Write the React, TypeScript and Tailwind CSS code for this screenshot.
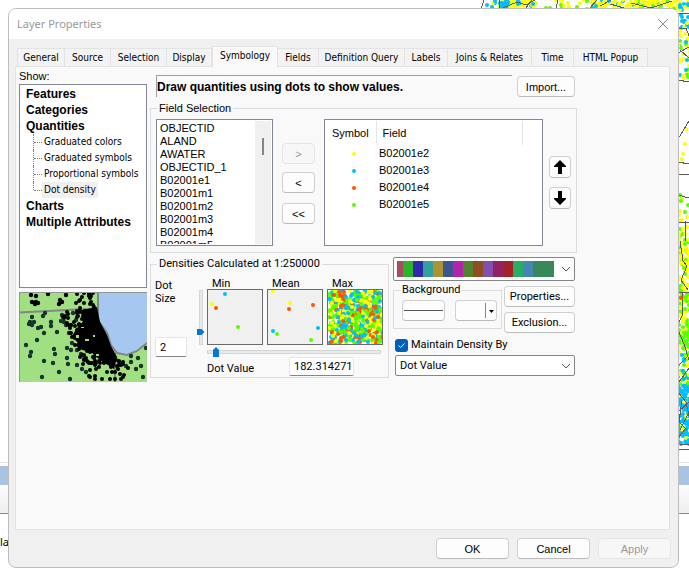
import React from "react";
import clsx from "clsx";

const YELLOW = "#ffff00";
const BLUE = "#00bfff";
const ORANGE = "#ff5500";
const GREEN = "#55ff00";

function seeded(seed: number) {
  let s = seed;
  return () => {
    s = (s * 1664525 + 1013904223) % 4294967296;
    return s / 4294967296;
  };
}

type Dot = { x: number; y: number; c: string };

function scatter(
  seed: number,
  count: number,
  x: number,
  y: number,
  w: number,
  h: number,
  colors: string[]
): Dot[] {
  const rnd = seeded(seed);
  return Array.from({ length: count }, () => ({
    x: Math.round(x + rnd() * w),
    y: Math.round(y + rnd() * h),
    c: colors[Math.floor(rnd() * colors.length)],
  }));
}

function Dots({ dots, r = 2 }: { dots: Dot[]; r?: number }) {
  return (
    <>
      {dots.map((d, i) => (
        <circle key={i} cx={d.x} cy={d.y} r={r} fill={d.c} />
      ))}
    </>
  );
}

const TOP_DOTS = [
  ...scatter(3, 5, 484, 0, 14, 9, [YELLOW, BLUE]),
  ...scatter(5, 70, 499, 0, 38, 9, [YELLOW, BLUE, YELLOW, YELLOW]),
  ...scatter(6, 14, 500, 0, 8, 9, [BLUE]),
  ...scatter(7, 16, 538, 0, 50, 9, [YELLOW, GREEN, YELLOW]),
  ...scatter(9, 50, 592, 0, 43, 9, [YELLOW, YELLOW, YELLOW, BLUE]),
  ...scatter(11, 70, 635, 0, 54, 9, [YELLOW, YELLOW, YELLOW, GREEN]),
];

const SIDE_DOTS = [
  ...scatter(13, 26, 678, 4, 12, 24, [YELLOW, BLUE, BLUE]),
  ...scatter(15, 36, 678, 28, 12, 52, [YELLOW, YELLOW, YELLOW, BLUE, GREEN]),
  ...scatter(17, 4, 680, 118, 9, 50, [YELLOW]),
  ...scatter(19, 18, 678, 195, 10, 40, [YELLOW, YELLOW, GREEN]),
  ...scatter(21, 80, 678, 234, 12, 60, [YELLOW, YELLOW, GREEN]),
  ...scatter(23, 100, 678, 294, 12, 60, [GREEN, YELLOW, GREEN]),
  ...scatter(25, 50, 678, 354, 12, 32, [GREEN, BLUE, YELLOW]),
  ...scatter(27, 120, 678, 386, 12, 58, [BLUE, BLUE, BLUE, BLUE, BLUE, BLUE, BLUE, YELLOW]),
];

function MapBackdrop() {
  return (
    <svg
      className="absolute top-0 right-0"
      width="689"
      height="460"
      viewBox="0 0 689 460"
      aria-hidden="true"
    >
      <Dots dots={TOP_DOTS} />
      <Dots dots={SIDE_DOTS} />
      <path
        d="M484 0 481 9M499 0v9M503 8l14-6 9 3 9-5M526 8l6-8M556 8l2-8M590 8l7-8M600 6l11-6M631 3l20 5 21-7M610 4l14 4M678 13h11M678 28l8 0 3 8M680 50l9 8M678 53l11-6M678 80l11 2M678 139l11-18M678 162l11 2M678 175l11-1M678 195l11 3M685 221v20M678 222h11M680 241l3 20 4 5-6 14 7 10M678 292h11M682 292v24l-4 8M678 330l6 14 5 16M678 366l9-9M679 382l10-14M678 392l8 10 3 14M678 412l11-10M682 400l-3 22 8 8M688 414l-8 16M678 438l8-10M680 444h9M679 449h10"
        fill="none"
        stroke="#5a5a5a"
        strokeWidth="1"
        shapeRendering="crispEdges"
      />
      <circle cx="681" cy="298" r="2" fill={ORANGE} />
    </svg>
  );
}

const TABS = [
  { name: "General", width: "w-12" },
  { name: "Source", width: "w-[46px]" },
  { name: "Selection", width: "w-14" },
  { name: "Display", width: "w-[45px]" },
  { name: "Symbology", width: "w-[66px]" },
  { name: "Fields", width: "w-[41px]" },
  { name: "Definition Query", width: "w-[86px]" },
  { name: "Labels", width: "w-[43px]" },
  { name: "Joins & Relates", width: "w-[84px]" },
  { name: "Time", width: "w-[42px]" },
  { name: "HTML Popup", width: "w-[74px]" },
];

const CONDENSED = "font-['DejaVu_Sans_Condensed','Liberation_Sans',sans-serif] text-[10px]";

function TabBar() {
  return (
    <div role="tablist" className={clsx("flex h-[27px] items-end pl-2", CONDENSED)}>
      {TABS.map((t) => {
        const active = t.name === "Symbology";
        return (
          <button
            key={t.name}
            type="button"
            role="tab"
            aria-selected={active}
            className={clsx(
              "shrink-0 border-t border-r border-[#e3e3e3] text-center whitespace-nowrap",
              t.width,
              active ? "z-10 -mb-px h-[21px] border-l bg-[#f9f9f9] pb-0.5" : "h-[18px] bg-[#f3f3f3]",
              t.name === "General" && "border-l"
            )}
          >
            {t.name}
          </button>
        );
      })}
    </div>
  );
}

function PushButton({
  children,
  className,
  disabled,
  label,
}: {
  children: React.ReactNode;
  className?: string;
  disabled?: boolean;
  label?: string;
}) {
  return (
    <button
      type="button"
      disabled={disabled}
      aria-label={label}
      className={clsx(
        "flex shrink-0 items-center justify-center rounded border",
        disabled
          ? "border-[#e6e6e6] bg-[#f7f7f7] text-[#9a9a9a]"
          : "border-[#d0d0d0] border-b-[#bbbbbb] bg-[#fdfdfd]",
        className
      )}
    >
      {children}
    </button>
  );
}

function Group({
  title,
  className,
  children,
}: {
  title: string;
  className?: string;
  children: React.ReactNode;
}) {
  return (
    <fieldset className={clsx("min-w-0 border border-[#dcdcdc]", className)}>
      <legend className="ml-1.5 h-3.5 px-0.5 leading-[14px] whitespace-nowrap">{title}</legend>
      {children}
    </fieldset>
  );
}

function TreeHeading({ children }: { children: React.ReactNode }) {
  return (
    <div className="h-4 pl-1.5 text-[12px] leading-4 font-bold">
      {children}
    </div>
  );
}

const QUANTITIES = ["Graduated colors", "Graduated symbols", "Proportional symbols", "Dot density"];

function ShowTree() {
  return (
    <div className="h-[204px] border border-[#82879a] bg-white pt-px">
      <TreeHeading>Features</TreeHeading>
      <TreeHeading>Categories</TreeHeading>
      <TreeHeading>Quantities</TreeHeading>
      <ul className={clsx("pl-[13px]", CONDENSED)}>
        {QUANTITIES.map((q, i) => (
          <li key={q} className="flex h-4 leading-4 whitespace-nowrap">
            <span
              className={clsx(
                "shrink-0 border-l border-dotted border-[#808080]",
                i === QUANTITIES.length - 1 ? "h-2" : "h-4"
              )}
            />
            <span className="mt-2 h-0 w-2 shrink-0 border-t border-dotted border-[#808080]" />
            <span className={clsx("px-0.5", q === "Dot density" && "bg-[#f0f0f0]")}>{q}</span>
          </li>
        ))}
      </ul>
      <TreeHeading>Charts</TreeHeading>
      <TreeHeading>Multiple Attributes</TreeHeading>
    </div>
  );
}

function cityDots(): Dot[] {
  const rnd = seeded(42);
  const out: Dot[] = [];
  for (let i = 0; i < 110; i++) {
    const y = 18 + rnd() * 54;
    const coast = 77 + Math.max(0, y - 26) * 0.45;
    out.push({ x: Math.round(coast - rnd() * 32 - 2), y: Math.round(y), c: "#000000" });
  }
  for (let i = 0; i < 34; i++) {
    out.push({ x: Math.round(66 + rnd() * 44), y: Math.round(68 + rnd() * 20), c: "#000000" });
  }
  for (let i = 0; i < 24; i++) {
    out.push({ x: Math.round(56 + rnd() * 20), y: Math.round(rnd() * 22), c: "#000000" });
  }
  return out;
}

const CITY = cityDots();

const TOWNS: [number, number][] = [
  [12, 3], [17, 4], [13, 10], [16, 12], [19, 11], [17, 10], [29, 2], [41, 8], [43, 10], [40, 12], [47, 3],
  [13, 25], [11, 30], [13, 33], [10, 32], [15, 30], [19, 36], [22, 35], [26, 21], [24, 24], [32, 30], [32, 34],
  [43, 23], [42, 29], [45, 30], [47, 33], [38, 40], [25, 41], [7, 53], [18, 48], [12, 60], [11, 64],
  [35, 57], [36, 62], [25, 69], [34, 71], [40, 80], [23, 85], [51, 87], [48, 66], [49, 72], [52, 58],
  [48, 56], [58, 58], [53, 51], [56, 46], [50, 41], [52, 33], [62, 62], [65, 67], [63, 77], [67, 80],
  [54, 21], [58, 73], [57, 28], [61, 48], [64, 54], [122, 74], [124, 85], [112, 70], [119, 66],
  [112, 64], [127, 56], [117, 77], [107, 74],
];

function LayerThumbnail() {
  return (
    <svg className="mt-1 block" width="128" height="90" viewBox="0 0 128 90" aria-hidden="true">
      <rect width="128" height="90" fill="#a1e082" />
      <path d="M79 0V28L88 41 92 53 98 61 108 62 118 59 128 51V0Z" fill="#a6c8f0" />
      <path
        d="M0 20.500 78 16.500M79 0V28L88 41 92 53 98 61 108 63 118 59 128 51M96 61v29"
        fill="none"
        stroke="#858585"
        strokeWidth="2"
      />
      {TOWNS.map(([x, y], i) => (
        <circle key={i} cx={x} cy={y} r="2.200" fill={y < 18 ? "#000000" : "#17342f"} />
      ))}
      <path
        d="M63 18 78 15 81 30 88 43 92 54 98 65 95 77 81 68 72 60 63 58 58 50 53 44 58 36 64 30Z"
        fill="#000000"
      />
      <Dots dots={CITY} r={2} />
      <path d="M57 43h3v3h-3ZM66 47h4v2h-4ZM74 43h2v2h-2ZM62 35h3v1h-3ZM77 62h3v2h-3Z" fill="#a1e082" />
      <path d="M.5 90V.5H128" fill="none" stroke="#929292" />
    </svg>
  );
}

const FIELDS = [
  "OBJECTID", "ALAND", "AWATER", "OBJECTID_1", "B02001e1",
  "B02001m1", "B02001m2", "B02001m3", "B02001m4", "B02001m5",
];

const SYMBOLS = [
  { field: "B02001e2", color: YELLOW },
  { field: "B02001e3", color: BLUE },
  { field: "B02001e4", color: ORANGE },
  { field: "B02001e5", color: GREEN },
];

function Arrow({ down }: { down?: boolean }) {
  return (
    <svg width="14" height="16" viewBox="0 0 14 16" className={down ? "rotate-180" : undefined}>
      <path d="M7 1 13 7V8H9V15H5V8H1V7Z" fill="#000" />
    </svg>
  );
}

function FieldSelection() {
  return (
    <Group title="Field Selection" className="mt-1 h-[152px]">
      <div className="flex px-[5px] pt-1">
        <div className="flex h-[127px] w-[117px] shrink-0 border border-[#82879a] bg-white p-px">
          <ul
            role="listbox"
            aria-label="Available fields"
            className="flex-1 overflow-hidden pl-0.5"
          >
            {FIELDS.map((f) => (
              <li key={f} role="option" aria-selected={false} className="h-[13px] leading-[14px]">
                {f}
              </li>
            ))}
          </ul>
          <div className="flex w-4 justify-center bg-[#f0f0f0] pt-[17px]">
            <div className="h-[17px] w-0.5 bg-[#858585]" />
          </div>
        </div>
        <div className="ml-[9px] flex w-[33px] shrink-0 flex-col pt-6">
          <PushButton disabled className="h-[21px] w-full">&gt;</PushButton>
          <PushButton className="mt-2 h-[21px] w-full">&lt;</PushButton>
          <PushButton className="mt-2.5 h-[21px] w-full">&lt;&lt;</PushButton>
        </div>
        <div className="ml-[9px] min-w-0 flex-1 border border-[#82879a] bg-white pt-px">
          <table className="w-full table-fixed border-collapse text-left">
            <thead>
              <tr className="h-6">
                <th scope="col" className="w-[51px] border-r border-[#e5e5e5] pl-[7px] font-normal">Symbol</th>
                <th scope="col" className="border-r border-[#e5e5e5] pl-1.5 font-normal">Field</th>
                <td className="w-5" />
              </tr>
            </thead>
            <tbody>
              {SYMBOLS.map((s) => (
                <tr key={s.field} className="h-[17px] leading-[17px]">
                  <td className="pl-[27px]">
                    <svg width="4" height="4" viewBox="0 0 4 4" className="block">
                      <circle cx="2" cy="2" r="2" fill={s.color} />
                    </svg>
                  </td>
                  <td className="pl-[3px]">{s.field}</td>
                  <td />
                </tr>
              ))}
            </tbody>
          </table>
        </div>
        <div className="ml-1.5 flex w-[22px] shrink-0 flex-col gap-[9px] pt-[37px]">
          <PushButton label="Move up" className="h-[22px] w-full"><Arrow /></PushButton>
          <PushButton label="Move down" className="h-[22px] w-full"><Arrow down /></PushButton>
        </div>
      </div>
    </Group>
  );
}

const MIN_DOTS: Dot[] = [
  { x: 18, y: 5, c: BLUE }, { x: 5, y: 15, c: YELLOW }, { x: 9, y: 19, c: ORANGE }, { x: 31, y: 38, c: GREEN },
];

const MEAN_DOTS: Dot[] = [
  { x: 6, y: 2, c: YELLOW }, { x: 23, y: 14, c: YELLOW }, { x: 46, y: 16, c: ORANGE }, { x: 22, y: 20, c: ORANGE },
  { x: 6, y: 42, c: BLUE }, { x: 10, y: 45, c: GREEN }, { x: 51, y: 39, c: BLUE }, { x: 44, y: 51, c: GREEN },
];

const MAX_DOTS = scatter(77, 680, 2, 2, 52, 52, [YELLOW, BLUE, ORANGE, GREEN, GREEN]);

function DensityPreview({ title, dots, fill }: { title: string; dots: Dot[]; fill: string }) {
  return (
    <figure className="w-14">
      <figcaption className="h-3 pl-[5px] leading-[14px]">{title}</figcaption>
      <svg className="block overflow-visible" width="56" height="56" viewBox="0 0 56 56" aria-hidden="true">
        <rect x="0.500" y="0.500" width="55" height="55" fill={fill} />
        <Dots dots={dots} />
        <rect x="0.500" y="0.500" width="55" height="55" fill="none" stroke="#6a6a6a" />
      </svg>
    </figure>
  );
}

const BOXED_INPUT =
  "border border-[#e5e5e5] border-b-[#868686] rounded-xs bg-white outline-none";

function Densities() {
  return (
    <Group title="Densities Calculated at 1:250000" className="h-[121px] w-[239px] shrink-0">
      <div className="flex pl-1">
        <div className="flex w-[33px] shrink-0 flex-col pt-2">
          <label htmlFor="dot-size" className="leading-[13px]">Dot Size</label>
          <input id="dot-size" defaultValue="2" className={clsx("mt-8 h-5 w-8 pl-1", BOXED_INPUT)} />
        </div>
        <input
          type="range"
          aria-label="Dot size"
          min={0}
          max={100}
          defaultValue={81}
          className="mt-[19px] ml-2 h-[55px] w-[9px] shrink-0 appearance-none bg-transparent [writing-mode:vertical-lr] [&::-webkit-slider-runnable-track]:w-1 [&::-webkit-slider-runnable-track]:border [&::-webkit-slider-runnable-track]:border-[#d6d6d6] [&::-webkit-slider-runnable-track]:bg-[#e7eaea] [&::-webkit-slider-thumb]:-ml-[3px] [&::-webkit-slider-thumb]:h-[6px] [&::-webkit-slider-thumb]:w-2 [&::-webkit-slider-thumb]:appearance-none [&::-webkit-slider-thumb]:bg-[#0078d7] [&::-webkit-slider-thumb]:[clip-path:polygon(0_0,62%_0,100%_50%,62%_100%,0_100%)]"
        />
        <div className="ml-0.5 min-w-0 flex-1 pt-1.5">
          <div className="flex gap-1">
            <DensityPreview title="Min" dots={MIN_DOTS} fill="#f0f0f0" />
            <DensityPreview title="Mean" dots={MEAN_DOTS} fill="#f0f0f0" />
            <DensityPreview title="Max" dots={MAX_DOTS} fill="#ffffff" />
          </div>
          <input
            type="range"
            aria-label="Dot value"
            min={0}
            max={100}
            defaultValue={3}
            className="mt-0.5 block h-2.5 w-[174px] appearance-none bg-transparent [&::-webkit-slider-runnable-track]:h-1 [&::-webkit-slider-runnable-track]:border [&::-webkit-slider-runnable-track]:border-[#d6d6d6] [&::-webkit-slider-runnable-track]:bg-[#e7eaea] [&::-webkit-slider-thumb]:-mt-1 [&::-webkit-slider-thumb]:h-2.5 [&::-webkit-slider-thumb]:w-[6px] [&::-webkit-slider-thumb]:appearance-none [&::-webkit-slider-thumb]:bg-[#0078d7] [&::-webkit-slider-thumb]:[clip-path:polygon(0_30%,50%_0,100%_30%,100%_100%,0_100%)]"
          />
          <div className="flex items-center">
            <label htmlFor="dot-value" className="w-[82px] pt-1">Dot Value</label>
            <input
              id="dot-value"
              defaultValue="182.314271"
              className={clsx("h-[19px] w-[65px] pl-1", BOXED_INPUT)}
            />
          </div>
        </div>
      </div>
    </Group>
  );
}

function Chevron() {
  return (
    <svg
      className="pointer-events-none absolute top-1/2 right-1 -translate-y-1/2"
      width="10"
      height="6"
      viewBox="0 0 10 6"
      aria-hidden="true"
    >
      <path d="M1 1 5 5 9 1" fill="none" stroke="#555555" />
    </svg>
  );
}

const RAMP = [
  { fill: "bg-[#a64d5c]", width: "w-1.5" },
  { fill: "bg-[#2bb32a]", width: "w-2.5" },
  { fill: "bg-[#2f2aac]", width: "w-2.5" },
  { fill: "bg-[#32a09c]", width: "w-2.5" },
  { fill: "bg-[#ac9433]", width: "w-2.5" },
  { fill: "bg-[#3f558f]", width: "w-2.5" },
  { fill: "bg-[#b324ad]", width: "w-2.5" },
  { fill: "bg-[#4f852e]", width: "w-2.5" },
  { fill: "bg-[#914d20]", width: "w-2.5" },
  { fill: "bg-[#814fae]", width: "w-2.5" },
  { fill: "bg-[#932164]", width: "w-2.5" },
  { fill: "bg-[#a32227]", width: "w-2.5" },
  { fill: "bg-[#29ae61]", width: "w-2.5" },
  { fill: "bg-[#4784b2]", width: "w-2.5" },
  { fill: "bg-[#38885c]", width: "w-[21px]" },
];

function SymbolOptions() {
  return (
    <div className="mr-0.5 ml-1 min-w-0 flex-1">
      <div className="relative">
        <select
          aria-label="Color ramp"
          className="block h-6 w-full appearance-none rounded-xs border border-[#868686] bg-white outline-none"
        >
          <option value="ramp"></option>
        </select>
        <div className="pointer-events-none absolute top-1 left-1 flex h-4">
          {RAMP.map((r) => (
            <span key={r.fill} className={clsx(r.fill, r.width)} />
          ))}
        </div>
        <Chevron />
      </div>
      <div className="mt-0.5 flex">
        <Group title="Background" className="h-[46px] w-[109px] shrink-0">
          <div className="flex gap-2.5 pt-[3px] pl-2">
            <PushButton label="Background outline" className="h-[21px] w-[43px]">
              <span className="h-px w-[39px] bg-[#555555]" />
            </PushButton>
            <PushButton label="Background fill" className="h-[21px] w-[42px]">
              <span className="ml-auto h-[15px] w-px bg-[#868686]" />
              <svg width="5" height="3" viewBox="0 0 5 3" className="mt-px mr-[2px] ml-[3px]">
                <path d="M0 0h5L2.500 3Z" fill="#000" />
              </svg>
            </PushButton>
          </div>
        </Group>
        <div className="ml-0.5 flex min-w-0 flex-1 flex-col gap-[5px] pt-[3px]">
          <PushButton className="h-[21px] w-full">Properties...</PushButton>
          <PushButton className="h-[21px] w-full">Exclusion...</PushButton>
        </div>
      </div>
      <div className="mt-[5px] flex items-center pl-0.5">
        <span className="relative h-[13px] w-[13px]">
          <input
            id="maintain"
            type="checkbox"
            defaultChecked
            className="block h-[13px] w-[13px] appearance-none rounded-[3px] bg-[#005fb8]"
          />
          <svg
            className="pointer-events-none absolute top-0 left-0"
            width="13"
            height="13"
            viewBox="0 0 13 13"
            aria-hidden="true"
          >
            <path d="M3.500 6.500 5.500 8.500 9.500 4.500" fill="none" stroke="#ffffff" />
          </svg>
        </span>
        <label htmlFor="maintain" className="ml-[3px] leading-[14px]">Maintain Density By</label>
      </div>
      <div className="relative mt-[3px] ml-0.5">
        <select
          aria-label="Maintain density by"
          className="block h-[21px] w-full appearance-none rounded-xs border border-[#868686] bg-white pl-1 outline-none"
        >
          <option>Dot Value</option>
        </select>
        <Chevron />
      </div>
    </div>
  );
}

export default function App() {
  return (
    <div className="relative h-screen overflow-hidden bg-white font-['Liberation_Sans',Arial,sans-serif] text-[11px] leading-[14px] text-black">
      <MapBackdrop />
      <div className="absolute inset-x-0 top-[462px] border-t border-[#e3e3e3]">
        <div className="mt-[3px] h-[19px] bg-[#a9c3e0]" />
        <div className="h-[29px] border-b border-[#85858c] bg-linear-to-b from-[#fbfbfb] to-[#efefef]" />
        <div className="mt-[21px] font-['Noto_Sans',sans-serif]">lat</div>
      </div>
      <main className="relative h-full pt-2 pr-2.5 pb-[7px] pl-2">
        <section
          aria-label="Layer Properties"
          className="flex h-full flex-col overflow-hidden rounded-lg border border-[#bdbdbd] bg-[#f0f0f0]"
        >
          <header className="flex h-[30px] shrink-0 items-center justify-between bg-white pr-[9px] pl-2">
            <h1 className="font-['Noto_Sans',sans-serif] text-[#999999]">Layer Properties</h1>
            <button type="button" aria-label="Close">
              <svg width="12" height="12" viewBox="0 0 12 12">
                <path d="M1 1 11 11M11 1 1 11" stroke="#8a8a8a" fill="none" />
              </svg>
            </button>
          </header>
          <TabBar />
          <div
            role="tabpanel"
            aria-label="Symbology"
            className="mr-2 ml-1.5 flex min-h-0 flex-1 items-start border border-[#e3e3e3] bg-[#f9f9f9] pl-[3px]"
          >
            <div className="w-32 shrink-0">
              <div className="h-[17px] leading-[19px]">Show:</div>
              <ShowTree />
              <LayerThumbnail />
            </div>
            <div className="mr-[92px] ml-[3px] min-w-0 flex-1 pt-2">
              <div className="flex gap-[5px] pr-0.5 pl-1.5">
                <h2 className="h-[22px] min-w-0 flex-1 border-t border-l border-[#a0a0a0] text-[12px] leading-[22px] font-bold whitespace-nowrap">
                  Draw quantities using dots to show values.
                </h2>
                <PushButton className="mt-px h-[21px] w-[58px]">Import...</PushButton>
              </div>
              <FieldSelection />
              <div className="mt-1 flex items-start font-['Roboto','Liberation_Sans',sans-serif]">
                <Densities />
                <SymbolOptions />
              </div>
            </div>
          </div>
          <footer className="flex h-[37px] shrink-0 justify-end gap-2 pt-2 pr-[7px]">
            <PushButton className="h-[21px] w-[73px]">OK</PushButton>
            <PushButton className="h-[21px] w-[73px]">Cancel</PushButton>
            <PushButton disabled className="h-[21px] w-[73px]">Apply</PushButton>
          </footer>
        </section>
      </main>
    </div>
  );
}
